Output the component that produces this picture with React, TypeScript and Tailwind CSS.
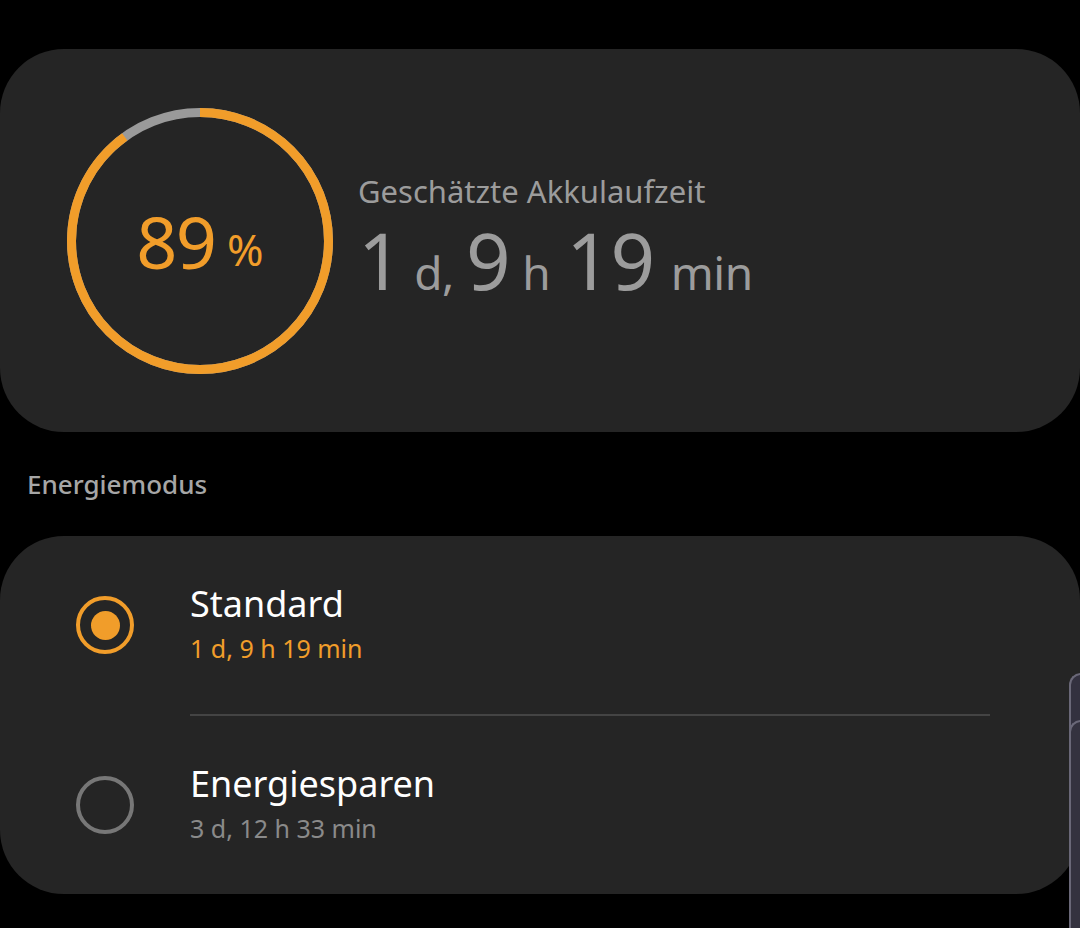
import React from "react";

const font = { fontFamily: '"Noto Sans", "Open Sans", sans-serif' };

const BatteryRing: React.FC<{ percent: number }> = ({ percent }) => {
  const r = 128.5;
  const c = 2 * Math.PI * r;
  const used = (c * (percent + 1)) / 100;
  return (
    <div className="relative w-[266px] h-[266px] shrink-0">
      <svg width="266" height="266" viewBox="0 0 266 266" className="absolute inset-0">
        <circle cx="133" cy="133" r={r} fill="none" stroke="#9a9a9a" strokeWidth="9" />
        <circle
          cx="133"
          cy="133"
          r={r}
          fill="none"
          stroke="#f19d2a"
          strokeWidth="9"
          strokeDasharray={`${used} ${c}`}
          transform="rotate(-90 133 133)"
        />
      </svg>
      <div className="absolute inset-0 flex items-center justify-center text-[#f19d2a]">
        <span className="text-[72px] leading-none tracking-tight">{percent}</span>
        <span className="text-[44px] leading-none ml-3 mt-4">%</span>
      </div>
    </div>
  );
};

const modes = [
  { name: "Standard", time: "1 d, 9 h 19 min", selected: true },
  { name: "Energiesparen", time: "3 d, 12 h 33 min", selected: false },
];

const Radio: React.FC<{ on: boolean }> = ({ on }) =>
  on ? (
    <div className="w-[58px] h-[58px] rounded-full border-[4px] border-[#f19d2a] flex items-center justify-center">
      <div className="w-[29px] h-[29px] rounded-full bg-[#f19d2a]" />
    </div>
  ) : (
    <div className="w-[58px] h-[58px] rounded-full border-[4px] border-[#777777]" />
  );

export default function App() {
  return (
    <div className="relative w-[1080px] h-[928px] bg-black overflow-hidden" style={font}>
      <div className="pt-[49px]">
        <div className="h-[383px] rounded-[64px] bg-[#252525] flex items-center pl-[67px]">
          <BatteryRing percent={89} />
          <div className="ml-[25px] text-[#9c9c9c] -mt-[6px]">
            <div className="text-[31px] leading-none">Geschätzte Akkulaufzeit</div>
            <div className="flex items-baseline mt-[14px] leading-none tracking-tight">
              <span className="text-[78px]">1</span>
              <span className="text-[46px] ml-3">d,</span>
              <span className="text-[78px] ml-3">9</span>
              <span className="text-[46px] ml-3">h</span>
              <span className="text-[78px] ml-4">19</span>
              <span className="text-[46px] ml-4">min</span>
            </div>
          </div>
        </div>
      </div>

      <div className="pl-[27px] pt-[34px] pb-[34px] text-[26px] font-medium text-[#a6a6a6] leading-[36px]">
        Energiemodus
      </div>

      <div className="h-[358px] rounded-[64px] bg-[#252525]">
        {modes.map((m, i) => (
          <div key={m.name}>
            {i > 0 && <div className="ml-[190px] mr-[90px] h-[2px] bg-[#444444]" />}
            <div className="flex items-center h-[178px]">
              <div className="w-[190px] pl-[76px] shrink-0">
                <Radio on={m.selected} />
              </div>
              <div className="-mt-[4px]">
                <div className="text-[36px] leading-[44px] text-white">{m.name}</div>
                <div
                  className={`text-[25px] leading-[32px] mt-[6px] ${
                    m.selected ? "text-[#f19d2a]" : "text-[#8a8a8a]"
                  }`}
                >
                  {m.time}
                </div>
              </div>
            </div>
          </div>
        ))}
      </div>

      {/* edge panel handle */}
      <div className="absolute left-[1069px] top-[673px] w-[20px] h-[300px] rounded-tl-[12px] bg-[#33313f] border-l-2 border-t-2 border-[#6a6878]" />
      <div className="absolute left-[1069px] top-[720px] w-[20px] h-[300px] rounded-tl-[12px] bg-[#34323f] border-l-2 border-t-2 border-[#6a6878]" />
    </div>
  );
}
